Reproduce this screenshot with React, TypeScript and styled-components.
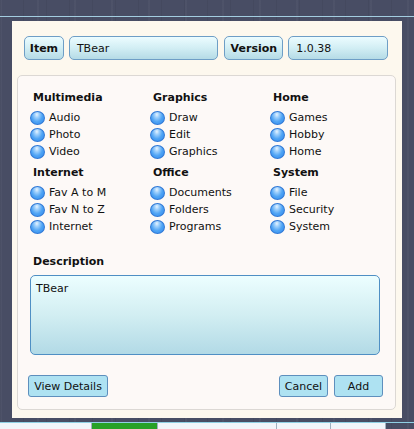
import styled, { createGlobalStyle } from 'styled-components';

const GlobalStyle = createGlobalStyle`
  html, body {
    margin: 0;
    padding: 0;
    background: #484d64;
  }
  body {
    font-family: 'DejaVu Sans', Verdana, sans-serif;
    font-size: 11px;
    color: #111;
  }
`;

const Page = styled.div`
  width: 414px;
  height: 429px;
  overflow: hidden;
  display: flex;
  flex-direction: column;
  padding-top: 16px;
  box-sizing: border-box;
  background-color: #484d64;
  background-image:
    repeating-linear-gradient(90deg, rgba(255, 255, 255, 0.03) 0 2px, transparent 2px 37px),
    repeating-linear-gradient(90deg, rgba(0, 0, 0, 0.05) 0 1px, transparent 1px 23px);
`;

const TopRule = styled.div`
  height: 1px;
  background: #a3cde0;
  flex-shrink: 0;
`;

const Panel = styled.div`
  margin: 4px 12px 0;
  width: 390px;
  height: 397px;
  box-sizing: border-box;
  background: #fdf8ee;
  padding: 15px 6px 8px 5px;
  display: flex;
  flex-direction: column;
`;

const HeaderRow = styled.div`
  display: flex;
  align-items: center;
  gap: 5px;
  margin: 0 7px;
  height: 24px;
`;

const Pill = styled.div<{ $width: number; $bold?: boolean }>`
  width: ${({ $width }) => $width}px;
  height: 24px;
  box-sizing: border-box;
  border: 1px solid #6e9ec6;
  border-radius: 5px;
  background: linear-gradient(#ecfcff, #d2eef4 50%, #b5dbe6);
  display: flex;
  align-items: center;
  padding: 0 ${({ $bold }) => ($bold ? '0' : '7px')};
  justify-content: ${({ $bold }) => ($bold ? 'center' : 'flex-start')};
  font-weight: ${({ $bold }) => ($bold ? 'bold' : 'normal')};
  margin-right: ${({ $bold }) => ($bold ? '0' : '1px')};
`;

const Inner = styled.div`
  margin-top: 15px;
  flex: 1;
  border: 1px solid #dcd8d4;
  border-radius: 5px;
  background: #fdf9f7;
  padding: 15px 12px 12px 12px;
  display: flex;
  flex-direction: column;
`;

const CategoryGrid = styled.div`
  display: grid;
  grid-template-columns: 120px 120px 120px;
  row-gap: 6px;
`;

const Group = styled.div`
  display: flex;
  flex-direction: column;
`;

const GroupTitle = styled.div`
  font-weight: bold;
  line-height: 14px;
  padding-left: 3px;
  margin-bottom: 4px;
`;

const RadioRow = styled.label`
  display: flex;
  align-items: center;
  gap: 4px;
  height: 17px;
`;

const RadioDot = styled.span`
  width: 15px;
  height: 14px;
  border-radius: 50%;
  box-sizing: border-box;
  border: 1px solid #2f78d6;
  background: radial-gradient(ellipse at 45% 22%, #e6f3ff 0%, #9fd0fc 22%, #4ea3f4 55%, #2f8aee 100%);
`;

const SectionTitle = styled.div`
  font-weight: bold;
  line-height: 14px;
  padding-left: 3px;
  margin-top: 20px;
`;

const DescriptionBox = styled.div`
  margin-top: 6px;
  height: 80px;
  box-sizing: border-box;
  border: 1px solid #4f8fc4;
  border-radius: 5px;
  background: linear-gradient(#ecfeff, #d2eef2 50%, #b2dae6);
  padding: 6px 5px;
  margin-right: 3px;
`;

const ButtonRow = styled.div`
  display: flex;
  gap: 6px;
  margin-top: 20px;
  margin-left: -2px;
`;

const Button = styled.button<{ $width: number }>`
  width: ${({ $width }) => $width}px;
  height: 22px;
  border: 1px solid #5e8fbd;
  border-radius: 3px;
  background: #aee2f2;
  font: inherit;
  color: #111;
  padding: 0;
`;

const Spacer = styled.div`
  flex: 1;
`;

const TaskStrip = styled.div`
  margin-top: 4px;
  height: 7px;
  display: flex;
  border-top: 1px solid #8fd0e4;
`;

const TaskItem = styled.div<{ $width: number; $active?: boolean; $dark?: boolean }>`
  width: ${({ $width }) => $width}px;
  flex-shrink: 0;
  background: ${({ $active, $dark }) => ($active ? '#27a127' : $dark ? 'transparent' : '#f1f5fa')};
  border-right: ${({ $dark }) => ($dark ? 'none' : '1px solid #9fb0c0')};
`;

const groups = [
  { title: 'Multimedia', items: ['Audio', 'Photo', 'Video'] },
  { title: 'Graphics', items: ['Draw', 'Edit', 'Graphics'] },
  { title: 'Home', items: ['Games', 'Hobby', 'Home'] },
  { title: 'Internet', items: ['Fav A to M', 'Fav N to Z', 'Internet'] },
  { title: 'Office', items: ['Documents', 'Folders', 'Programs'] },
  { title: 'System', items: ['File', 'Security', 'System'] },
];

const App = () => (
  <>
    <GlobalStyle />
    <Page>
      <TopRule />
      <Panel>
        <HeaderRow>
          <Pill $width={40} $bold>
            Item
          </Pill>
          <Pill $width={150}>TBear</Pill>
          <Pill $width={59} $bold>
            Version
          </Pill>
          <Pill $width={100}>1.0.38</Pill>
        </HeaderRow>
        <Inner>
          <CategoryGrid>
            {groups.map((group) => (
              <Group key={group.title}>
                <GroupTitle>{group.title}</GroupTitle>
                {group.items.map((item) => (
                  <RadioRow key={item}>
                    <RadioDot />
                    {item}
                  </RadioRow>
                ))}
              </Group>
            ))}
          </CategoryGrid>
          <SectionTitle>Description</SectionTitle>
          <DescriptionBox>TBear</DescriptionBox>
          <ButtonRow>
            <Button $width={80}>View Details</Button>
            <Spacer />
            <Button $width={49}>Cancel</Button>
            <Button $width={49}>Add</Button>
          </ButtonRow>
        </Inner>
      </Panel>
      <TaskStrip>
        <TaskItem $width={91} />
        <TaskItem $width={65} $active />
        <TaskItem $width={118} />
        <TaskItem $width={53} />
        <TaskItem $width={54} />
        <TaskItem $width={33} $dark />
      </TaskStrip>
    </Page>
  </>
);

export default App;
